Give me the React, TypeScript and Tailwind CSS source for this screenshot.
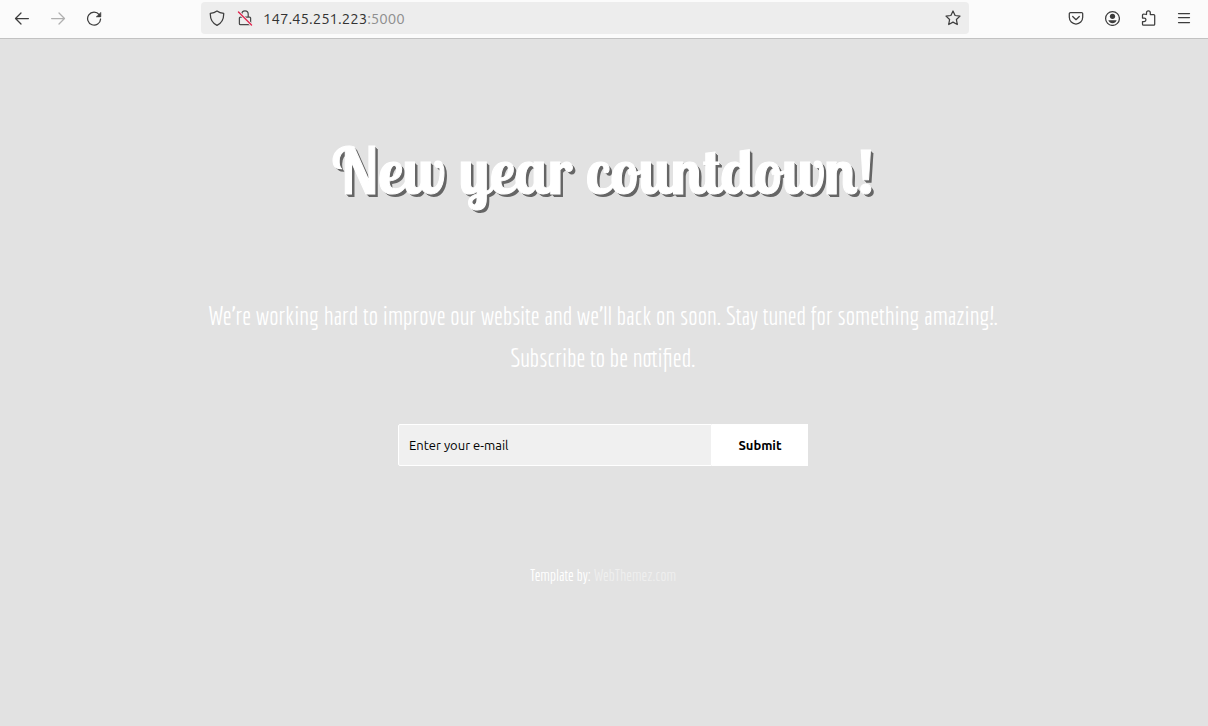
import React from "react";

type IconProps = { children: React.ReactNode; className?: string };

function Icon({ children, className = "text-[#3d3d3d]" }: IconProps) {
  return (
    <svg
      className={`size-4 shrink-0 ${className}`}
      viewBox="0 0 16 16"
      fill="none"
      stroke="currentColor"
      strokeWidth="1.25"
      strokeLinecap="round"
      strokeLinejoin="round"
      aria-hidden="true"
    >
      {children}
    </svg>
  );
}

function BarButton({ label, children }: { label: string; children: React.ReactNode }) {
  return (
    <button type="button" aria-label={label} className="flex h-9 w-9 items-center justify-center">
      {children}
    </button>
  );
}

function Toolbar() {
  return (
    <header className="flex h-[39px] items-start border-b border-[#c2c2c2] bg-[#fbfbfb] px-1">
      <nav className="flex w-[197px]" aria-label="History">
        <BarButton label="Back">
          <Icon>
            <path d="M14.4 8.5H1.6M7 3 1.5 8.5 7 14" />
          </Icon>
        </BarButton>
        <BarButton label="Forward">
          <Icon className="text-[#b0b0b0]">
            <path d="M1.6 8.5h12.8M9 3l5.500 5.500L9 14" />
          </Icon>
        </BarButton>
        <BarButton label="Reload">
          <Icon>
            <path d="M13.200 4.600A6.500 6.500 0 1 0 14.600 9" />
            <path d="M14.900 2.600v4.300h-4.500Z" fill="currentColor" strokeWidth="0.5" />
          </Icon>
        </BarButton>
      </nav>

      <div className="mt-[2px] flex h-8 w-[64%] items-center rounded bg-[#ededed] px-2">
        <Icon>
          <path d="M8 .9c2 1.400 4.200 2.100 6.700 2.400C14.900 8.800 13 13 8 15.400 3 13 1.100 8.800 1.300 3.300 3.800 3 6 2.300 8 .9Z" />
        </Icon>
        <Icon className="ml-3 text-[#4a4a4a]">
          <path d="M4.800 7V4a3.200 3.200 0 0 1 6.400 0v3M3.400 7h9.200a1 1 0 0 1 1 1v5.700a1 1 0 0 1-1 1H3.400a1 1 0 0 1-1-1V8a1 1 0 0 1 1-1Z" />
          <path d="M1.500 2 14.500 15" stroke="#ededed" strokeWidth="3" />
          <path d="M1.500 2 14.500 15" stroke="#e22850" strokeWidth="1.4" />
        </Icon>
        <div className="relative ml-[10px] flex-1 pt-[2px] font-['Ubuntu','Noto_Sans',sans-serif] text-[15px] leading-6">
          <input
            aria-label="Address"
            className="block w-full bg-transparent text-transparent caret-[#333333] outline-none"
          />
          <span className="pointer-events-none absolute inset-0 pt-[2px] text-[#333333]">
            147.45.251.223<span className="text-[#8f8f8f]">:5000</span>
          </span>
        </div>
        <button type="button" aria-label="Bookmark this page">
          <Icon>
            <path d="m8 1 2.100 4.500 4.900.6-3.600 3.400.9 5L8 12.100l-4.300 2.400.9-5L1 6.100l4.900-.6Z" />
          </Icon>
        </button>
      </div>

      <div className="flex flex-1 justify-end pr-[2px]">
        <BarButton label="Save to Pocket">
          <Icon>
            <path d="M2.500 2.500h11a1.200 1.200 0 0 1 1.200 1.200v3.600a6.700 6.700 0 0 1-13.400 0V3.700a1.200 1.200 0 0 1 1.200-1.200Z" />
            <path d="M4.700 6.500 8 9.700l3.300-3.200" />
          </Icon>
        </BarButton>
        <BarButton label="Account">
          <Icon>
            <circle cx="8.500" cy="8.500" r="6.900" />
            <circle cx="8.500" cy="6.300" r="2.600" fill="currentColor" stroke="none" />
            <path d="M4.300 10.200h8.400c-.7 2-2.400 3-4.200 3s-3.500-1-4.200-3Z" fill="currentColor" stroke="none" />
          </Icon>
        </BarButton>
        <BarButton label="Extensions">
          <Icon>
            <path d="M6.500 4.500V2.700a1.900 1.900 0 0 1 3.800 0v1.800h3.400a1 1 0 0 1 1 1v8.700a1 1 0 0 1-1 1H3.500a1 1 0 0 1-1-1v-2.700h1.700a1.700 1.700 0 0 0 0-3.500H2.500v-3a1 1 0 0 1 1-1Z" />
          </Icon>
        </BarButton>
        <BarButton label="Open application menu">
          <Icon>
            <path d="M2.500 3.500h11M2.500 7.500h11M2.500 12.500h11" />
          </Icon>
        </BarButton>
      </div>
    </header>
  );
}

export default function App() {
  return (
    <div className="flex min-h-screen flex-col bg-[#e2e2e2]">
      <Toolbar />
      <main className="flex flex-col items-center pt-[87px] pr-[2px] pb-8 text-center text-white">
        <h1 className="font-['Lobster_Two','Lobster',serif] text-[64px] leading-[88px] font-bold [-webkit-text-stroke:1px_white] [text-shadow:1px_1px_0_#666,2px_2px_0_#666,3px_3px_0_#666]">
          New year countdown!
        </h1>
        <p className="mt-[81px] font-['Economica','Roboto_Condensed',sans-serif] text-[25px] leading-[42px]">
          We’re working hard to improve our website and we’ll back on soon. Stay tuned for something amazing!.
          <br />
          Subscribe to be notified.
        </p>
        <form
          className="mt-[45px] flex h-[42px] w-full max-w-[410px] font-['Ubuntu','Noto_Sans',sans-serif] text-[13px] text-black"
          onSubmit={(event) => event.preventDefault()}
        >
          <input
            type="email"
            aria-label="E-mail"
            placeholder="Enter your e-mail"
            className="min-w-0 flex-1 rounded-l-[2px] border border-white bg-[#f0f0f0] px-[10px] pt-[2px] outline-none placeholder:text-black"
          />
          <button type="submit" className="w-[96px] bg-white pt-[2px] font-bold">
            Submit
          </button>
        </form>
        <footer className="mt-[97px] font-['Economica','Roboto_Condensed',sans-serif] text-[16px] leading-6">
          Template by:{" "}
          <a href="#webthemez" className="text-[#efefef]">
            WebThemez.com
          </a>
        </footer>
      </main>
    </div>
  );
}
